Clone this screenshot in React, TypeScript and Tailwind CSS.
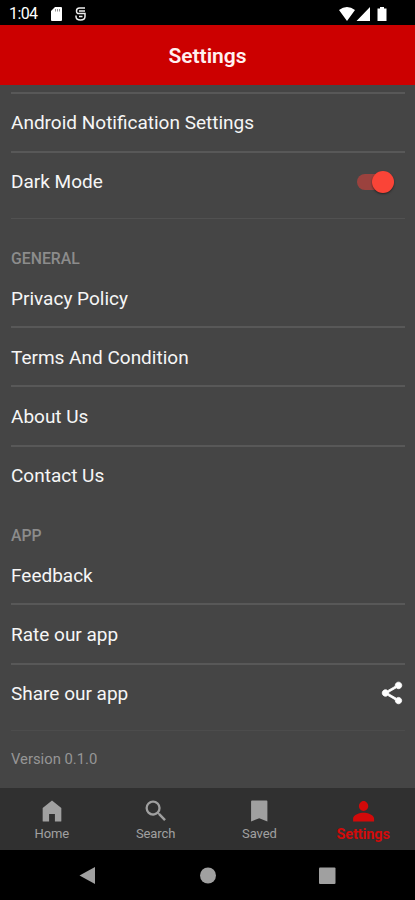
import type { ReactNode } from "react";

function Row({ label, tall, low, children }: { label: string; tall?: boolean; low?: boolean; children?: ReactNode }) {
  return (
    <div className={`flex items-center justify-between ${tall ? "h-[58px]" : "h-[57px]"} ${low ? "pt-[2px]" : ""}`}>
      <span className="text-[19px] leading-6 text-[#f6f6f6]">{label}</span>
      {children}
    </div>
  );
}

function Line() {
  return <div className="h-[2px] bg-[#585858]" />;
}

function Heading({ children }: { children: ReactNode }) {
  return <h2 className="h-[21px] text-[15.8px] leading-[21px] font-medium text-[#8c8c8c]">{children}</h2>;
}

function Tab({ label, path, active }: { label: string; path: string; active?: boolean }) {
  return (
    <div className={`flex flex-1 flex-col items-center pt-[9px] ${active ? "text-[#d20a0a]" : "text-[#a0a0a0]"}`}>
      <svg className="h-[28px] w-[28px]" viewBox="0 0 24 24" fill="currentColor">
        <path d={path} />
      </svg>
      <span
        className={`leading-4 ${active ? "mt-[2px] text-[14.5px] font-bold tracking-[-0.1px]" : "mt-px text-[13px] tracking-[-0.1px]"}`}
      >
        {label}
      </span>
    </div>
  );
}

export default function App() {
  return (
    <div className="flex h-[900px] w-[415px] flex-col overflow-hidden bg-[#454545] font-['Roboto',sans-serif]">
      <div className="flex h-[25px] shrink-0 items-center bg-black pt-[2px] pr-[28px] pl-[9px] text-white">
        <span className="w-[42px] text-[16px] leading-5 tracking-[-0.6px]">1:04</span>
        <svg className="h-[14px] w-[11px]" viewBox="0 0 11 14">
          <path d="M4 0h6q1 0 1 1v12q0 1-1 1H1q-1 0-1-1V4z" fill="#fff" />
          <path d="M4.5 2v2.5M6.5 2v2.5M8.5 2v2.5" stroke="#777" strokeWidth=".8" />
        </svg>
        <svg className="ml-[13px] h-[14px] w-[11px]" viewBox="0 0 11 14" fill="none" stroke="#eee" strokeWidth="1.500">
          <path d="M10 1H4.500Q1.500 1 1.500 4T4.500 6.500H10V9.500Q10 13 5.500 13T1 9.500V8.500M4 4H10M4 9.500H7.500" />
        </svg>
        <svg className="ml-auto h-[14px] w-[48px]" viewBox="0 0 48 14" fill="#fff">
          <path d="M0 3Q8-3 16 3L8 14zM31 0V14H17.500zM39 1.500h2V0h4v1.500h2.500V14H38.500V1.500z" />
        </svg>
      </div>
      <header className="flex h-[60px] shrink-0 items-center justify-center bg-[#cc0000] pt-[2px]">
        <h1 className="text-[21px] leading-6 font-semibold text-[#fff0f0]">Settings</h1>
      </header>
      <main className="h-[703px] shrink-0 pt-[7px] pr-[10px] pl-[11px]">
        <Line />
        <Row label="Android Notification Settings" />
        <Line />
        <Row label="Dark Mode">
          <div className="mr-[11px] flex h-4 w-[37px] items-center justify-end rounded-full bg-[#9b423e]">
            <div className="h-[22px] w-[22px] shrink-0 rounded-full bg-[#fa4437] shadow-[0_1px_2px_rgba(0,0,0,0.5)]" />
          </div>
        </Row>
        <div className="mt-2 mb-[29px] h-px bg-[#515151]" />
        <Heading>GENERAL</Heading>
        <Row label="Privacy Policy" low />
        <Line />
        <Row label="Terms And Condition" low />
        <Line />
        <Row label="About Us" tall low />
        <Line />
        <Row label="Contact Us" />
        <div className="h-[21px]" />
        <Heading>APP</Heading>
        <Row label="Feedback" low />
        <Line />
        <Row label="Rate our app" tall low />
        <Line />
        <Row label="Share our app">
          <svg
            className="mb-px h-[26px] w-[26px]"
            viewBox="0 0 24 24"
            fill="#fff"
            stroke="#fff"
            strokeWidth=".8"
          >
            <path d="M18 16.080c-.76 0-1.440.3-1.960.77L8.910 12.700c.05-.23.09-.46.09-.7s-.04-.47-.09-.7l7.050-4.110c.54.5 1.250.81 2.040.81 1.660 0 3-1.340 3-3s-1.340-3-3-3-3 1.340-3 3c0 .24.040.47.090.7L8.040 9.810C7.500 9.310 6.790 9 6 9c-1.660 0-3 1.340-3 3s1.340 3 3 3c.79 0 1.500-.31 2.040-.81l7.120 4.160c-.05.21-.08.43-.08.65 0 1.610 1.310 2.920 2.920 2.920s2.920-1.310 2.920-2.920-1.310-2.920-2.920-2.920z" />
          </svg>
        </Row>
        <div className="mt-2 h-px bg-[#4c4c4c]" />
        <p className="mt-[18px] text-[14.8px] leading-5 text-[#969696]">Version 0.1.0</p>
      </main>
      <nav className="flex h-[62px] shrink-0 bg-[#303030]">
        <Tab label="Home" path="M12 3L4 9.500V20.500Q4 21 4.500 21H9.500V14.500h5V21h5Q20 21 20 20.500V9.500z" />
        <Tab label="Search" path="M15.500 14h-.79l-.28-.27A6.471 6.471 0 0 0 16 9.500 6.500 6.500 0 1 0 9.500 16c1.610 0 3.090-.59 4.230-1.570l.27.28v.79l5 4.990L20.490 19l-4.990-5zm-6 0C7.010 14 5 11.990 5 9.500S7.010 5 9.500 5 14 7.010 14 9.500 11.990 14 9.500 14z" />
        <Tab label="Saved" path="M18.500 3H6Q5.200 3 5.200 3.800V21l7-2.800 7 2.800V3.800Q19.200 3 18.500 3z" />
        <Tab label="Settings" active path="M12.500 12c2.210 0 4-1.790 4-4s-1.790-4.500-4-4.500-4 2.290-4 4.500 1.790 4 4 4zm0 1.500c-3 0-9 1.500-9 5V21h18v-2.500c0-3.500-6-5-9-5z" />
      </nav>
      <div className="h-[50px] shrink-0 bg-black">
        <svg className="h-[50px] w-[415px]" viewBox="0 0 415 50" fill="#a0a0a0">
          <path d="M79.500 25.500L95 17v17z" />
          <circle cx="208" cy="25.500" r="8" />
          <rect x="319" y="17.500" width="16.500" height="16.500" rx="1" />
        </svg>
      </div>
    </div>
  );
}
